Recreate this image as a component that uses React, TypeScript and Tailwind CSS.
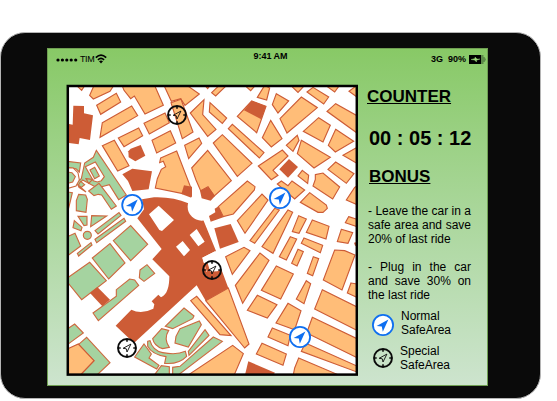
import React from 'react';

type Kind = 'o' | 'g' | 'r' | 'w';
type Block = [Kind, string];
interface Sector {
  x: number;
  y: number;
  blocks: Block[];
}

const styles: Record<Kind, { fill: string; stroke: string }> = {
  o: { fill: '#ffbd78', stroke: '#cd5c36' },
  g: { fill: '#a5d3a0', stroke: '#cd6a40' },
  r: { fill: '#cd5c36', stroke: 'none' },
  w: { fill: '#ffffff', stroke: '#cd6a40' },
};

// City blocks per sector; map units are thirds of a pixel.
const sectors: Sector[] = [
  {
    x: 192, y: 246,
    blocks: [
      ['o', '35,8 64,8 53,25'],
      ['o', '92,6 77,40 88,51 138,28 152,6'],
      ['o', '98,70 157,34 170,60 110,97'],
      ['o', '115,122 203,72 221,101 108,166'],
      ['o', '175,12 180,25 200,50 211,42 243,96 298,70 270,6 180,6'],
      ['o', '163,168 224,138 236,161 180,194'],
      ['o', '115,191 151,175 195,251 161,267'],
      ['o', '240,124 303,93 316,122 256,156'],
      ['o', '264,175 319,146 335,183 278,213'],
      ['r', '28,71 60,72 60,94 87,100 78,174 47,168 44,187 15,183 15,126 26,128'],
      ['r', '200,200 230,189 244,221 214,238 194,226 193,208'],
      ['r', '175,277 205,260 264,268 254,322 205,327 192,297'],
      ['g', '97,205 187,339 164,353 136,308 100,318 56,294 44,310 66,330 45,316 38,300 52,290 62,243 88,226'],
      ['w', '64,254 94,240 121,284 112,296 100,300 88,296'],
      ['g', '78,264 92,256 106,282 92,290'],
      ['g', '10,238 50,243 46,270 36,260 10,256'],
      ['w', '10,258 28,258 42,272 46,294 36,312 10,320'],
      ['g', '10,270 24,272 34,284 26,300 10,304'],
    ],
  },
  {
    x: 480, y: 246,
    blocks: [
      ['o', '2,228 50,207 92,316 68,335 -14,318 -8,290 4,262 17,254 10,238 -1,242'],
      ['o', '10,6 34,58 62,50 75,70 118,36 75,6'],
      ['o', '33,62 63,52 99,150 67,170'],
      ['o', '91,93 132,53 128,98 168,142 143,163'],
      ['o', '150,62 200,108 187,124 148,90'],
      ['o', '155,32 182,6 204,6 167,42'],
      ['o', '133,8 152,8 143,20'],
      ['o', '74,190 117,168 125,184 86,230'],
      ['o', '160,183 187,158 276,244 232,283'],
      ['o', '205,140 217,127 312,212 298,228'],
      ['o', '232,103 275,57 318,73 290,152'],
      ['r', '275,57 318,73 304,112 252,85'],
      ['o', '252,8 288,8 272,26'],
    ],
  },
  {
    x: 774, y: 246,
    blocks: [
      ['o', '-2,46 20,10 35,18 26,54'],
      ['o', '55,35 92,57 60,93 43,68'],
      ['o', '130,45 178,77 87,153 66,110'],
      ['o', '147,30 165,16 212,45 197,66'],
      ['o', '96,8 142,8 120,31'],
      ['o', '200,8 246,8 230,30'],
      ['o', '207,88 233,65 297,101 297,153'],
      ['o', '297,10 273,28 297,45'],
      ['o', '38,115 72,170 40,195 13,167'],
      ['o', '136,148 182,107 217,130 195,180'],
      ['o', '233,142 287,178 232,210 211,190'],
      ['o', '118,160 123,175 105,208 85,190'],
      ['o', '130,175 217,226 168,258 118,215'],
      ['o', '255,220 297,196 297,244'],
      ['o', '210,262 233,240 288,275 265,304'],
      ['o', '133,265 152,280 149,304 120,282'],
      ['o', '172,278 195,273 245,315 224,351 165,312 172,292'],
      ['o', '1,252 73,204 90,222 45,265 60,280 40,293'],
      ['r', '93,231 120,255 90,287 64,262'],
    ],
  },
  {
    x: 192, y: 540,
    blocks: [
      ['g', '74,33 105,10 157,78 142,88 113,45 103,43 90,47'],
      ['g', '44,43 65,45 70,58 66,97 37,92 37,62'],
      ['g', '10,36 25,38 20,60 10,100'],
      ['g', '50,4 62,14 52,22 43,16'],
      ['g', '66,-4 86,-2 74,10'],
      ['g', '42,109 69,109 69,135 60,137'],
      ['g', '83,107 128,108 80,140'],
      ['g', '31,122 54,142 51,152 27,143'],
      ['g', '93,152 165,98 171,106 102,162'],
      ['g', '93,178 180,115 185,124 98,188'],
      ['g', '10,170 33,160 50,198 10,228'],
      ['g', '40,220 81,188 84,195 44,228'],
      ['g', '148,182 200,137 251,193 200,242'],
      ['g', '85,234 138,191 183,249 134,297'],
      ['g', '10,294 77,247 127,302 53,359 10,306'],
      ['g', '228,270 249,254 272,280 240,304 226,293'],
    ],
  },
  {
    x: 774, y: 540,
    blocks: [
      ['o', '58,12 70,3 90,17 102,3 140,30 110,57'],
      ['o', '155,38 205,75 208,85 195,97 180,97 127,67'],
      ['o', '297,18 290,22 265,60 297,74'],
      ['o', '272,110 297,118 297,140 262,128'],
      ['o', '250,148 284,158 270,190 238,185'],
      ['o', '12,200 90,90 104,97 45,220'],
      ['o', '122,107 145,117 123,160 103,155'],
      ['o', '163,120 213,139 204,177 145,157'],
      ['o', '138,174 194,196 187,218 130,190'],
      ['o', '97,170 116,177 85,240 64,230'],
      ['o', '120,208 136,215 117,258 101,250'],
      ['o', '166,230 182,236 164,287 148,280'],
      ['o', '230,210 260,212 291,225 252,330 196,300'],
      ['o', '55,258 106,282 68,357 10,331'],
      ['r', '288,188 296,186 296,198 291,197'],
    ],
  },
  {
    x: 192, y: 834,
    blocks: [
      ['r', '78,45 100,27 138,65 115,85'],
      ['g', '87,105 157,55 157,35 197,3 212,6 224,22 103,128'],
      ['g', '10,153 32,138 58,165 10,200'],
      ['g', '68,178 138,254 100,290 50,290 90,248 43,200'],
      ['o', '43,198 90,248 50,290 10,290 10,213'],
      ['g', '212,237 240,198 262,228 255,240 285,262 278,273'],
    ],
  },
  {
    x: 480, y: 834,
    blocks: [
      ['o', '262,97 292,52 351,80 322,120'],
      ['r', '265,250 345,284 340,290 255,290'],
      ['o', '137,68 205,30 267,198 254,210'],
      ['o', '92,68 110,55 213,173 180,170'],
      ['o', '86,290 218,202 250,227 223,290'],
      ['g', '72,90 102,114 98,122 38,152 16,145'],
      ['g', '60,152 118,129 124,140 85,207 45,195 48,175'],
      ['g', '135,155 147,172 87,232 85,220'],
      ['g', '160,177 187,190 56,290 38,290 38,268 60,265'],
      ['g', '-16,290 4,263 28,266 28,290'],
    ],
  },
  {
    x: 774, y: 834,
    blocks: [
      ['o', '-5,228 12,196 85,228 75,262'],
      ['o', '145,8 158,17 138,77 115,63'],
      ['o', '193,35 297,87 297,157 170,93'],
      ['o', '279,15 297,18 297,58 268,45'],
      ['o', '90,76 129,98 110,155 54,135'],
      ['o', '163,118 297,182 297,239 146,165'],
      ['o', '43,150 97,172 90,203 30,177'],
      ['o', '142,195 297,264 297,282 130,220'],
      ['o', '122,240 240,290 106,290 110,270'],
    ],
  },
  {
    x: 480, y: 540,
    blocks: [
      ['o', '95,-36 143,-89 214,2 163,48 144,20 122,32 108,0'],
      ['o', '175,80 262,3 285,20 283,30 220,102 190,110'],
      ['o', '232,122 306,42 324,60 255,160'],
      ['o', '270,182 344,85 358,90 284,190'],
      ['o', '197,230 252,202 270,212 217,283'],
      ['o', '226,316 300,219 327,241 248,370'],
      ['r', '72,16 96,20 96,54 64,42'],
      ['r', '163,145 212,132 236,186 180,206'],
    ],
  },
];

function NormalPin({ x, y }: { x: number; y: number }) {
  return (
    <g transform={`translate(${x} ${y})`}>
      <circle r="10.1" fill="#fff" stroke="#0f6ff0" strokeWidth="1.8" />
      <path d="M5.4 -5.4 L-6.4 1 L-1.2 1.6 L-0.2 6.8 Z" fill="#0f6ff0" />
    </g>
  );
}

function SpecialPin({ x, y, fill = '#fff' }: { x: number; y: number; fill?: string }) {
  return (
    <g transform={`translate(${x} ${y})`} stroke="#0a0a0a" fill="none">
      <circle r="9" fill={fill} strokeWidth="1.9" />
      <path d="M0 -9V-6.3M0 9V6.3M-9 0H-6.3M9 0H6.3" strokeWidth="1.6" />
      <path d="M3.9 -3.9 L-3.9 0.3 L-0.7 0.8 L0 4 Z" strokeWidth="0.9" />
    </g>
  );
}

function CityMap() {
  return (
    <svg className="block h-[292px] w-[292px] shrink-0" viewBox="66 84 292 292">
      <clipPath id="frame">
        <rect x="67.8" y="86" width="289" height="288.6" />
      </clipPath>
      <rect x="67.8" y="86" width="289" height="288.6" fill="#fff" />
      <g clipPath="url(#frame)">
        <g transform="scale(0.33333)" strokeWidth="3.4">
          {sectors.map((s, i) => (
            <g key={i} transform={`translate(${s.x} ${s.y})`}>
              {s.blocks.map(([kind, points], j) => (
                <polygon key={j} points={points} fill={styles[kind].fill} stroke={styles[kind].stroke} />
              ))}
            </g>
          ))}
          <circle cx="262" cy="706" r="12" fill="#a5d3a0" stroke="#cd6a40" />
          {/* Curved garden beds */}
          <g transform="translate(480 834)" fill="#a5d3a0" stroke="#cd6a40">
            <path d="M-22 182L5 152L26 157Q10 182 28 208L8 212Q-18 204 -22 182Z" />
            <path d="M-37 190L-30 188Q-22 218 8 224Q50 232 76 220L80 235Q56 260 14 256L18 236Q-24 230 -37 205Z" />
          </g>
          {/* Central square */}
          <g transform="translate(480 540)">
            <path
              fill="#cd5c36"
              d="M-133 437L-86 389Q-56 404 -20 386L-17 373L-25 364L-5 344L3 352C22 344 28 320 28 289L-23 238L5 207L-68 115L-48 88L-54 58L-18 52Q40 50 85 70L130 120L168 213L127 233L140 275L184 268L205 324L137 362L110 316L-78 489Z"
            />
            <path fill="#fff" d="M-33 103L-4 77L42 120L6 153L-2 150Z M48 200L68 183L90 210L72 229Z M89 165L110 147L134 185L115 199Z" />
            <path fill="#fff" d="M127 233L165 214L184 268L172 274L140 275Z" />
            <path fill="#cd5c36" d="M132 250L142 246L158 300L150 304Z" />
            <circle cx="125" cy="80" r="42" fill="#fff" />
            <path fill="#cd5c36" d="M120 32L145 20L165 48L152 62L125 55Z M164 86L176 79L190 112L152 125L147 108L166 97Z" />
          </g>
        </g>
      </g>
      <NormalPin x={132.3} y={205} />
      <NormalPin x={280} y={198} />
      <NormalPin x={300} y={337} />
      <SpecialPin x={177} y={115} fill="none" />
      <SpecialPin x={212} y={270} fill="none" />
      <SpecialPin x={127} y={348} />
      <rect x="67.8" y="86" width="289" height="288.6" fill="none" stroke="#000" strokeWidth="2.5" />
    </svg>
  );
}

function StatusBar() {
  return (
    <div className="grid h-[35px] grid-cols-3 pt-[1px] text-[9px] leading-[12px]">
      <div className="flex items-start pt-[3px] pl-[8px]">
        <svg className="mt-[5px] h-[4px] w-[22px]" viewBox="0 0 22 4">
          {[2, 6.4, 10.8, 15.2, 19.7].map((cx) => (
            <circle key={cx} cx={cx} cy="2" r="1.6" />
          ))}
        </svg>
        <span className="ml-[2px] tracking-[-0.4px]">TIM</span>
        <svg className="ml-[1px] mt-[1px] h-[10px] w-[12px]" viewBox="0 0 12 10" fill="none" stroke="#000">
          <path d="M0.8 3.6Q6 -1.2 11.2 3.6" strokeWidth="1.7" />
          <path d="M2.9 5.8Q6 3 9.1 5.8" strokeWidth="1.6" />
          <path d="M4 7.3Q6 5.8 8 7.3L6 9.4Z" fill="#000" stroke="none" />
        </svg>
      </div>
      <div className="pl-[6px] text-center font-bold">9:41 AM</div>
      <div className="flex justify-end pt-[3px] pr-[1px] font-bold">
        <span>3G</span>
        <span className="ml-[5px]">90%</span>
        <svg className="ml-[3px] mt-[2px] h-[9px] w-[17px]" viewBox="0 0 17 9">
          <rect width="12" height="9" fill="#000" />
          <path d="M12 0H14.5V2H15.5L17 4.5L15.5 7H14.5V9H12Z" fill="#5d8b49" />
          <path d="M2 4.5L6 3.5V2L8 4H11L7.5 5.3V7L5.5 5Z" fill="#9bd67a" stroke="#9bd67a" strokeWidth="0.4" />
        </svg>
      </div>
    </div>
  );
}

function Sidebar() {
  return (
    <div className="flex w-[113px] flex-col pl-[10px] text-[12px] leading-[14px]">
      <h2 className="mt-[3px] -ml-[1px] text-[17px] leading-[20px] font-bold underline decoration-1 underline-offset-1">COUNTER</h2>
      <p className="mt-[19px] ml-[1px] text-[20px] leading-[24px] font-bold whitespace-nowrap">00 : 05 : 12</p>
      <h2 className="mt-[17px] ml-[1px] text-[17px] leading-[20px] font-bold underline decoration-1 underline-offset-1">BONUS</h2>
      <p className="mt-[17px] w-[103px] text-justify">- Leave the car in a safe area and save 20% of last ride</p>
      <p className="mt-[14px] w-[103px] text-justify">- Plug in the car and save 30% on the last ride</p>
      <div className="mt-[7px] flex">
        <svg className="mt-[4px] ml-[3px] h-[24px] w-[24px]" viewBox="-12 -12 24 24">
          <NormalPin x={0} y={0} />
        </svg>
        <p className="ml-[6px]">Normal<br />SafeArea</p>
      </div>
      <div className="mt-[7px] flex">
        <svg className="mt-[2px] ml-[3px] h-[24px] w-[24px]" viewBox="-12 -12 24 24">
          <SpecialPin x={0} y={0} fill="none" />
        </svg>
        <p className="ml-[5px]">Special<br />SafeArea</p>
      </div>
    </div>
  );
}

export default function App() {
  return (
    <div className="h-[401px] w-[557px] overflow-hidden bg-white pt-[32px] font-['Liberation_Sans',Arial,sans-serif] text-black">
      <div className="h-[367px] w-[541px] rounded-[25px] border border-[#b5b5b5] bg-[#0a0a0a] pt-[15px] pl-[46px]">
        <div className="h-[338px] w-[441px] border border-[#6f9f52] bg-linear-to-b from-[#88c966] to-[#cde4ce]">
          <StatusBar />
          <div className="flex pl-[18px]">
            <CityMap />
            <Sidebar />
          </div>
        </div>
      </div>
    </div>
  );
}
